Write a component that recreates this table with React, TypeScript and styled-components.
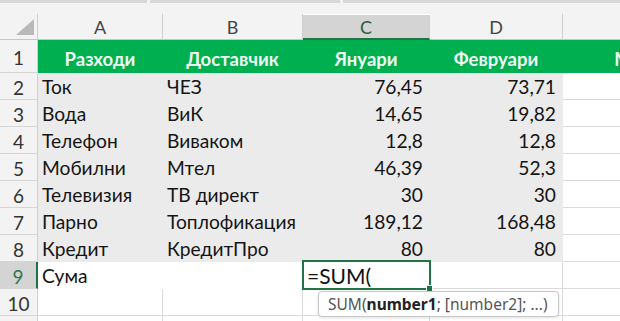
import styled, { createGlobalStyle } from "styled-components";

const GlobalStyle = createGlobalStyle`
  html, body {
    margin: 0;
    padding: 0;
    background: #fff;
    overflow: hidden;
  }
  body {
    font-family: Lato, "Liberation Sans", sans-serif;
  }
`;

const GREEN = "#00b050";
const ACCENT = "#217346";
const SHADE = "#ebebeb";
const GRID_LINE = "#dadada";

const COLUMN_WIDTHS = [38, 125, 140, 127, 133, 150];

const Sheet = styled.div`
  width: 620px;
  height: 321px;
  overflow: hidden;
  display: flex;
  flex-direction: column;
`;

const FormulaEdge = styled.div`
  height: 14px;
  flex: none;
  background: #f3f3f3;
  display: flex;
  gap: 3px;
  align-items: flex-start;
`;

const EdgeSegment = styled.div<{ $w?: number }>`
  height: 3px;
  background: #d8d8d8;
  width: ${({ $w }) => ($w ? `${$w}px` : "auto")};
  flex: ${({ $w }) => ($w ? "none" : "1")};
`;

const Grid = styled.div`
  display: grid;
  grid-template-columns: ${COLUMN_WIDTHS.map((w) => `${w}px`).join(" ")};
  grid-template-rows: 26px 33px repeat(10, 27px);
`;

const Corner = styled.div`
  position: relative;
  background: #f3f3f3;
  border-right: 1px solid #cfcfcf;
  border-bottom: 1px solid #c6c6c6;

  &::after {
    content: "";
    position: absolute;
    right: 3px;
    bottom: 4px;
    width: 18px;
    height: 16px;
    background: #b9b9b9;
    clip-path: polygon(100% 0, 100% 100%, 0 100%);
  }
`;

const ColHead = styled.div<{ $active?: boolean }>`
  box-sizing: border-box;
  display: flex;
  align-items: center;
  justify-content: center;
  font-size: 18px;
  color: ${({ $active }) => ($active ? "#2b5e3e" : "#444")};
  background: ${({ $active }) => ($active ? "#d4d4d4" : "#f3f3f3")};
  border-right: 1px solid #cfcfcf;
  border-bottom: ${({ $active }) =>
    $active ? `2px solid ${ACCENT}` : "1px solid #c6c6c6"};
  margin-top: ${({ $active }) => ($active ? "1px" : "0")};
`;

const RowHead = styled.div<{ $active?: boolean }>`
  box-sizing: border-box;
  display: flex;
  align-items: center;
  justify-content: center;
  padding-top: 2px;
  font-size: 19px;
  color: ${({ $active }) => ($active ? "#2e7a4b" : "#333")};
  background: ${({ $active }) => ($active ? "#d4d4d4" : "#f3f3f3")};
  border-right: ${({ $active }) =>
    $active ? `2px solid ${ACCENT}` : "1px solid #cfcfcf"};
  border-bottom: 1px solid #d6d6d6;
`;

const Cell = styled.div<{
  $fill?: string;
  $align?: "left" | "center" | "right";
  $title?: boolean;
}>`
  box-sizing: border-box;
  display: flex;
  align-items: flex-end;
  justify-content: ${({ $align }) =>
    $align === "right" ? "flex-end" : $align === "center" ? "center" : "flex-start"};
  padding: ${({ $title }) => ($title ? "0 4px 2px" : "0 6px 1px 4px")};
  white-space: nowrap;
  overflow: hidden;
  font-size: ${({ $title }) => ($title ? "18.5px" : "19.2px")};
  font-weight: ${({ $title }) => ($title ? 700 : 400)};
  color: ${({ $title }) => ($title ? "#effbf2" : "#141414")};
  background: ${({ $fill }) => $fill ?? "#fff"};
  border-right: 1px solid ${({ $fill }) => $fill ?? GRID_LINE};
  border-bottom: 1px solid ${({ $fill }) => $fill ?? GRID_LINE};
`;

const EditCell = styled.div`
  position: relative;
  z-index: 2;
  box-sizing: border-box;
  display: flex;
  align-items: flex-end;
  padding: 0 4px 1px 4px;
  font-size: 21px;
  color: #111;
  background: #fff;

  &::before {
    content: "";
    position: absolute;
    inset: -2px -1px -1px -1px;
    border: 2px solid ${ACCENT};
    pointer-events: none;
  }
`;

const FillHandle = styled.span`
  position: absolute;
  right: -3px;
  bottom: -3px;
  width: 5px;
  height: 5px;
  background: ${ACCENT};
  border: 1px solid #fff;
`;

const ArgHint = styled.div`
  position: absolute;
  top: calc(100% + 2px);
  left: 15px;
  height: 26px;
  box-sizing: border-box;
  display: flex;
  align-items: center;
  padding: 0 10px 0 9px;
  white-space: nowrap;
  font-family: "Noto Sans", "Open Sans", sans-serif;
  font-size: 15.5px;
  color: #555;
  background: #fff;
  border: 1px solid #c8c8c8;
  border-radius: 4px;
  box-shadow: 0 1px 3px rgba(0, 0, 0, 0.12);

  b {
    color: #222;
    font-weight: 700;
  }
`;

const titles = ["Разходи", "Доставчик", "Януари", "Февруари", "Март"];

const expenses = [
  ["Ток", "ЧЕЗ", "76,45", "73,71"],
  ["Вода", "ВиК", "14,65", "19,82"],
  ["Телефон", "Виваком", "12,8", "12,8"],
  ["Мобилни", "Мтел", "46,39", "52,3"],
  ["Телевизия", "ТВ директ", "30", "30"],
  ["Парно", "Топлофикация", "189,12", "168,48"],
  ["Кредит", "КредитПро", "80", "80"],
];

const letters = ["A", "B", "C", "D", ""];

export default function App() {
  return (
    <>
      <GlobalStyle />
      <Sheet>
        <FormulaEdge>
          <EdgeSegment $w={147} />
          <EdgeSegment $w={190} />
          <EdgeSegment />
        </FormulaEdge>
        <Grid>
          <Corner />
          {letters.map((l, i) => (
            <ColHead key={i} $active={l === "C"}>
              {l}
            </ColHead>
          ))}

          <RowHead>1</RowHead>
          {titles.map((t) => (
            <Cell key={t} $fill={GREEN} $align="center" $title>
              {t}
            </Cell>
          ))}

          {expenses.map((row, r) => (
            <>
              <RowHead key={`h${r}`}>{r + 2}</RowHead>
              {row.map((v, c) => (
                <Cell
                  key={`${r}-${c}`}
                  $fill={SHADE}
                  $align={c >= 2 ? "right" : "left"}
                >
                  {v}
                </Cell>
              ))}
              <Cell key={`e${r}`} />
            </>
          ))}

          <RowHead $active>9</RowHead>
          <Cell $fill="#fff">Сума</Cell>
          <Cell $fill="#fff" />
          <EditCell>
            =SUM(
            <FillHandle />
            <ArgHint>
              SUM(<b>number1</b>; [number2]; ...)
            </ArgHint>
          </EditCell>
          <Cell />
          <Cell />

          <RowHead>10</RowHead>
          {[0, 1, 2, 3, 4].map((c) => (
            <Cell key={`10-${c}`} />
          ))}

          {/* row 11 is only a sliver at the bottom edge */}
          <RowHead />
          {[0, 1, 2, 3, 4].map((c) => (
            <Cell key={`11-${c}`} />
          ))}
        </Grid>
      </Sheet>
    </>
  );
}
